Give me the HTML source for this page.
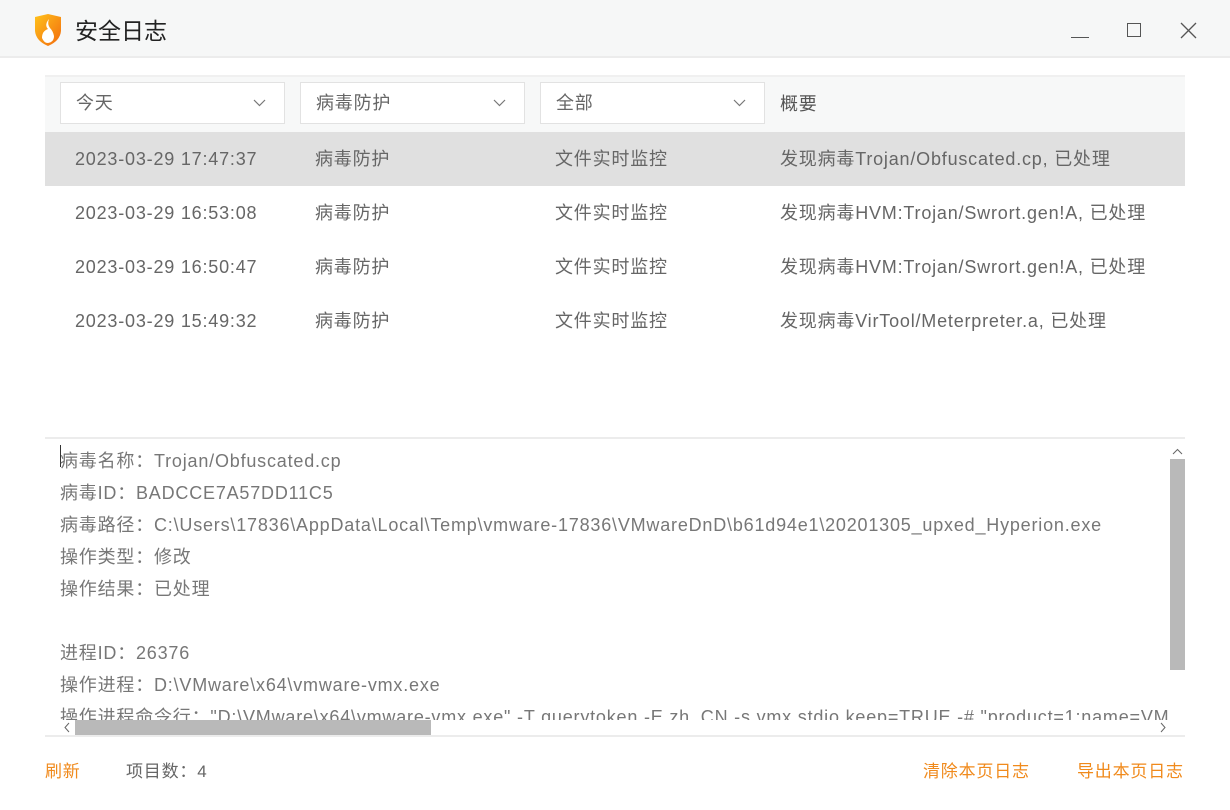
<!DOCTYPE html>
<html><head><meta charset="utf-8"><style>
*{margin:0;padding:0;box-sizing:border-box}
body{width:1230px;height:810px;background:#fff;font-family:"Liberation Sans","Noto Sans CJK SC",sans-serif;color:#666;position:relative;overflow:hidden;font-size:18px;letter-spacing:0.8px}
.abs{position:absolute;white-space:nowrap}
.title{left:0;top:0;width:1230px;height:58px;background:#f6f7f7;border-bottom:2px solid #ececec}
.hdr{left:45px;top:75px;width:1140px;height:57px;background:#f7f8f8;border-top:2px solid #f0f0f0}
.sel{top:82px;width:225px;height:42px;background:#fff;border:1px solid #e2e2e2}
.sel span{position:absolute;left:15px;top:0;line-height:40px;color:#666}
.sel svg{position:absolute;right:18px;top:16px}
.row{left:45px;width:1140px;height:54px}
.row span{position:absolute;top:0;line-height:54px}
</style></head><body>
<div class="abs title"></div>
<svg class="abs" style="left:33px;top:13px" width="30" height="34" viewBox="0 0 30 34"><defs><linearGradient id="g" x1="0" y1="0" x2="1" y2="1"><stop offset="0" stop-color="#ffc21a"/><stop offset="1" stop-color="#f26b0f"/></linearGradient></defs><path d="M2 4 L15 1 L28 4 L28 18 Q27 28 15 33 Q3 28 2 18Z" fill="url(#g)"/><path d="M16 6 Q11 12 15 16 Q9 18 9 25 Q11 30 15 30 Q21 29 21 23 Q20 18 17 15 Q14 11 16 6Z" fill="#fff"/></svg>
<div class="abs" style="left:75px;top:14px;line-height:34px;font-size:23px;color:#222;letter-spacing:0">安全日志</div>
<div class="abs" style="left:1071px;top:37px;width:18px;height:1px;background:#555"></div>
<div class="abs" style="left:1127px;top:23px;width:14px;height:14px;border:1px solid #555"></div>
<svg class="abs" style="left:1180px;top:22px" width="17" height="17"><path d="M1 1L16 16M16 1L1 16" stroke="#555" stroke-width="1.3"/></svg>
<div class="abs hdr"></div>
<div class="abs sel" style="left:60px"><span>今天</span><svg width="13" height="8"><path d="M1 1L6.5 6.5L12 1" stroke="#777" fill="none" stroke-width="1.2"/></svg></div>
<div class="abs sel" style="left:300px"><span>病毒防护</span><svg width="13" height="8"><path d="M1 1L6.5 6.5L12 1" stroke="#777" fill="none" stroke-width="1.2"/></svg></div>
<div class="abs sel" style="left:540px"><span>全部</span><svg width="13" height="8"><path d="M1 1L6.5 6.5L12 1" stroke="#777" fill="none" stroke-width="1.2"/></svg></div>
<div class="abs" style="left:780px;top:83px;line-height:42px;color:#555">概要</div>
<div class="abs row" style="top:132px;background:#e0e0e0"><span style="left:30px">2023-03-29 17:47:37</span><span style="left:270px">病毒防护</span><span style="left:510px">文件实时监控</span><span style="left:735px">发现病毒Trojan/Obfuscated.cp, 已处理</span></div>
<div class="abs row" style="top:186px"><span style="left:30px">2023-03-29 16:53:08</span><span style="left:270px">病毒防护</span><span style="left:510px">文件实时监控</span><span style="left:735px">发现病毒HVM:Trojan/Swrort.gen!A, 已处理</span></div>
<div class="abs row" style="top:240px"><span style="left:30px">2023-03-29 16:50:47</span><span style="left:270px">病毒防护</span><span style="left:510px">文件实时监控</span><span style="left:735px">发现病毒HVM:Trojan/Swrort.gen!A, 已处理</span></div>
<div class="abs row" style="top:294px"><span style="left:30px">2023-03-29 15:49:32</span><span style="left:270px">病毒防护</span><span style="left:510px">文件实时监控</span><span style="left:735px">发现病毒VirTool/Meterpreter.a, 已处理</span></div>
<div class="abs" style="left:45px;top:437px;width:1140px;height:2px;background:#ececec"></div>
<div class="abs" style="left:60px;top:445px;width:1px;height:22px;background:#333"></div>
<div class="abs" style="left:60px;top:445px;width:1108px;height:275px;overflow:hidden;line-height:32px;color:#777">
病毒名称：Trojan/Obfuscated.cp<br>病毒ID：BADCCE7A57DD11C5<br>病毒路径：C:\Users\17836\AppData\Local\Temp\vmware-17836\VMwareDnD\b61d94e1\20201305_upxed_Hyperion.exe<br>操作类型：修改<br>操作结果：已处理<br><br>进程ID：26376<br>操作进程：D:\VMware\x64\vmware-vmx.exe<br>操作进程命令行："D:\VMware\x64\vmware-vmx.exe" -T querytoken -E zh_CN -s vmx.stdio.keep=TRUE -# "product=1;name=VMware</div>
<svg class="abs" style="left:1172px;top:448px" width="11" height="7"><path d="M1 6L5.5 1.5L10 6" stroke="#666" fill="none"/></svg>
<div class="abs" style="left:1170px;top:459px;width:15px;height:211px;background:#b9b9b9"></div>
<div class="abs" style="left:45px;top:720px;width:1140px;height:16px;background:#fff"></div>
<svg class="abs" style="left:63px;top:722px" width="8" height="11"><path d="M6 1L2 5.5L6 10" stroke="#666" fill="none"/></svg>
<div class="abs" style="left:75px;top:720px;width:356px;height:15px;background:#b9b9b9"></div>
<svg class="abs" style="left:1159px;top:722px" width="8" height="11"><path d="M2 1L6 5.5L2 10" stroke="#666" fill="none"/></svg>
<div class="abs" style="left:45px;top:735px;width:1140px;height:2px;background:#ececec"></div>
<div class="abs" style="left:45px;top:759px;line-height:26px;color:#f08a1c;font-size:17px">刷新</div>
<div class="abs" style="left:126px;top:759px;line-height:26px;color:#666;font-size:17px">项目数：4</div>
<div class="abs" style="left:923px;top:759px;line-height:26px;color:#f08a1c;font-size:17px">清除本页日志</div>
<div class="abs" style="left:1077px;top:759px;line-height:26px;color:#f08a1c;font-size:17px">导出本页日志</div>
</body></html>
